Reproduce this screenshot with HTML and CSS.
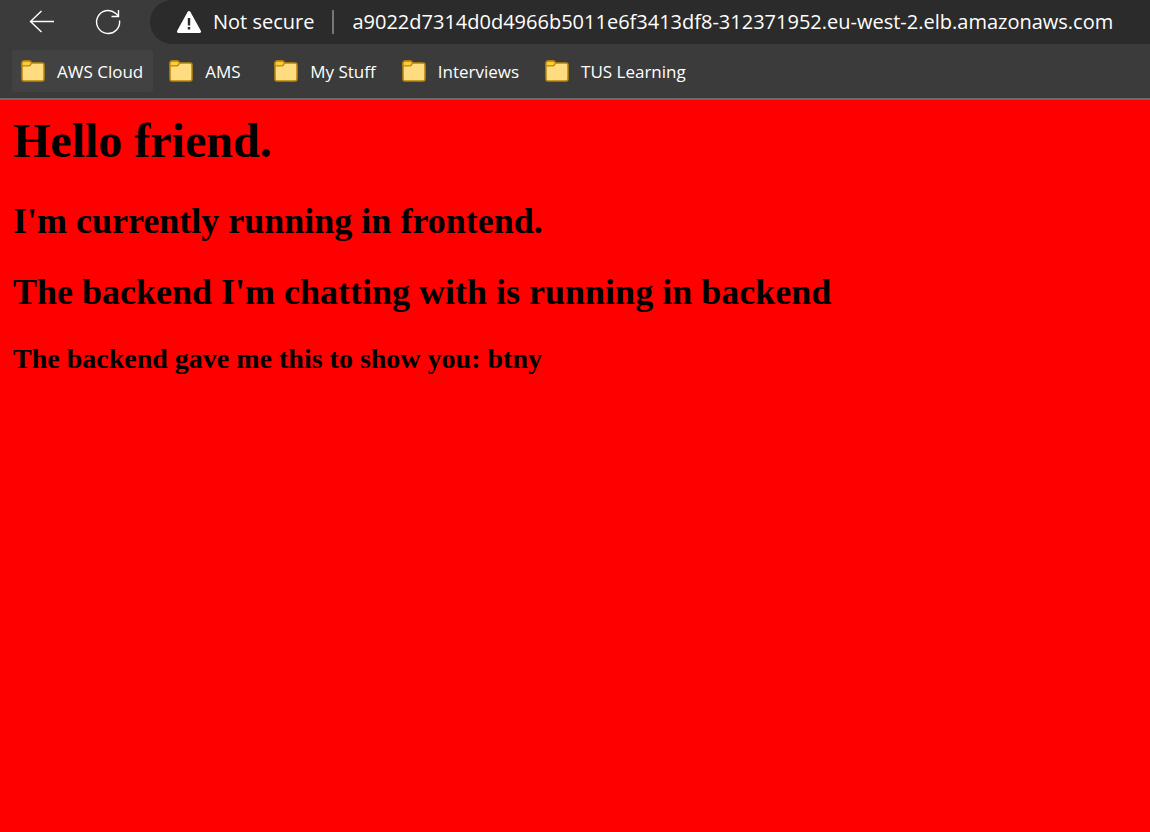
FILE: index.html
```html
<!DOCTYPE html>
<html lang="en">
<head>
<meta charset="utf-8">
<meta name="viewport" content="width=device-width, initial-scale=1">
<title>Hello friend.</title>
<link rel="stylesheet" href="styles.css">
</head>
<body>
<svg class="symbols" aria-hidden="true">
  <symbol id="folder" viewBox="0 0 24 22">
    <path d="M1 3.500Q1 1 3.500 1H8Q9.500 1 10.500 3H21Q23 3 23 5V19Q23 21 21 21H3Q1 21 1 19Z" fill="#ffdc80" stroke="#b8860b" stroke-width="1.500"/>
    <path d="M1 5.800V3.500Q1 1 3.500 1H8Q9.500 1 10.700 3L9.400 5Q8.800 5.800 7.800 5.800Z" fill="#fccb35" stroke="#b8860b" stroke-width="1.300"/>
  </symbol>
</svg>
<header class="chrome">
  <div class="toolbar">
    <nav class="nav-buttons" aria-label="Page navigation">
      <button class="icon-button" type="button" aria-label="Back">
        <svg width="26" height="26" viewBox="0 0 26 26"><path d="M25 12.500H1.500M12.500 2L1.500 12.500L12.500 23" fill="none" stroke="#fff" stroke-width="1.400"/></svg>
      </button>
      <button class="icon-button" type="button" aria-label="Refresh">
        <svg width="26" height="26" viewBox="0 0 26 26"><path d="M24.500 11.500A11.500 11.500 0 1 1 20.500 4.200L23.500 7M23.500 1V7.500H16.500" fill="none" stroke="#fff" stroke-width="1.400"/></svg>
      </button>
    </nav>
    <form class="address-bar">
      <button class="security" type="button">
        <svg width="24" height="24" viewBox="0 0 24 24"><path d="M12 2.500L22.500 21.500H1.500Z" fill="#fff" stroke="#fff" stroke-width="3" stroke-linejoin="round"/><path d="M12 8V15.500M12 17V19.500" stroke="#2b2b2b" stroke-width="2.400"/></svg>
        <span>Not secure</span>
      </button>
      <input class="url" type="text" aria-label="Address" value="a9022d7314d0d4966b5011e6f3413df8-312371952.eu-west-2.elb.amazonaws.com">
    </form>
  </div>
  <nav class="bookmarks" aria-label="Bookmarks">
    <button class="bookmark bookmark-active" type="button"><svg class="folder"><use href="#folder"/></svg>AWS Cloud</button>
    <button class="bookmark" type="button"><svg class="folder"><use href="#folder"/></svg>AMS</button>
    <button class="bookmark" type="button"><svg class="folder"><use href="#folder"/></svg>My Stuff</button>
    <button class="bookmark" type="button"><svg class="folder"><use href="#folder"/></svg>Interviews</button>
    <button class="bookmark" type="button"><svg class="folder"><use href="#folder"/></svg>TUS Learning</button>
  </nav>
</header>
<main class="page">
  <h1>Hello friend.</h1>
  <h2>I'm currently running in frontend.</h2>
  <h2>The backend I'm chatting with is running in backend</h2>
  <h3>The backend gave me this to show you: btny</h3>
</main>
</body>
</html>
```

FILE: styles.css
```css
* { box-sizing: border-box; }

body {
  margin: 0;
  min-height: 100vh;
  background: #f00;
  color: #000;
  font-family: "Liberation Serif", serif;
}

button, input {
  margin: 0;
  padding: 0;
  border: 0;
  background: none;
  color: #fff;
  font-family: "Open Sans", "Noto Sans", sans-serif;
}

.symbols { position: absolute; width: 0; height: 0; }

.chrome {
  background: #3b3b3b;
  border-bottom: 2px solid #6b6b6b;
}

.toolbar { display: flex; height: 44px; }

.nav-buttons {
  display: flex;
  gap: 40px;
  padding: 0 29px;
}

.icon-button, .icon-button svg { display: block; }

.address-bar {
  display: flex;
  flex: 1;
  align-items: center;
  min-width: 0;
  padding-left: 27px;
  border-radius: 22px 0 0 22px;
  background: #2b2b2b;
}

.security {
  display: flex;
  align-items: center;
  gap: 12px;
  padding-right: 18px;
  border-right: 2px solid #777;
  font-size: 20px;
  line-height: 24px;
  white-space: nowrap;
}

.url {
  flex: 1;
  min-width: 0;
  padding-left: 18px;
  font-size: 20px;
  line-height: 28px;
}

.bookmarks {
  display: flex;
  gap: 7px;
  padding: 6px 12px;
}

.bookmark {
  display: flex;
  align-items: center;
  gap: 12px;
  min-width: 98px;
  height: 42px;
  padding: 0 10px 0 9px;
  border-radius: 3px;
  font-size: 17px;
  white-space: nowrap;
}

.bookmark-active { background: #424242; }

.folder { width: 24px; height: 22px; }

.page { padding: 12px 13px; }

h1, h2, h3 { margin: 0; }

h1 { font-size: 48px; line-height: 58px; }

h2 { margin-top: 31px; font-size: 36px; line-height: 40px; }

h3 { margin-top: 31px; font-size: 28px; line-height: 32px; }
```
